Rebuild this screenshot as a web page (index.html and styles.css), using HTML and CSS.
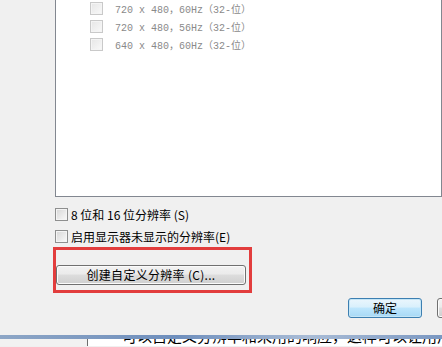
FILE: index.html
```html
<!DOCTYPE html>
<html lang="zh-CN">
<head>
    <meta charset="UTF-8">
    <title>显示器设置</title>
    <link rel="stylesheet" href="styles.css">
</head>
<body>
    <div class="dialog">
        <div class="modes">
            <div class="mode"><span class="box dim"></span>720 x 480，60Hz（32-位）</div>
            <div class="mode"><span class="box dim"></span>720 x 480，56Hz（32-位）</div>
            <div class="mode"><span class="box dim"></span>640 x 480，60Hz（32-位）</div>
        </div>

        <div class="options">
            <label class="option"><span class="box"></span>8 位和 16 位分辨率 (S)</label>
            <label class="option"><span class="box"></span>启用显示器未显示的分辨率(E)</label>
        </div>

        <div class="highlight">
            <button class="btn create">创建自定义分辨率 (C)...</button>
        </div>

        <div class="actions">
            <button class="btn default">确定</button>
            <button class="btn">取消</button>
        </div>
    </div>

    <div class="page">
        <div class="bar"></div>
        <div class="below">
            <div class="side"></div>
            <div class="text"><span>可以自定义分辨率和来用的响应，这样可以让用户，即分辨率、刷新率</span></div>
        </div>
    </div>
</body>
</html>
```

FILE: styles.css
```css
body {
    margin: 0;
    width: 442px;
    height: 347px;
    overflow: hidden;
    background: #f0f0f0;
    font-family: "Noto Sans CJK SC", sans-serif;
    font-size: 12px;
    color: #000;
}

.dialog {
    height: 336px;
    padding-left: 55px;
    box-sizing: border-box;
    white-space: nowrap;
}

.modes {
    height: 198px;
    box-sizing: border-box;
    background: #fff;
    border: 1px solid #828790;
    border-top: 0;
    padding-left: 34px;
}

.mode {
    display: flex;
    align-items: center;
    height: 18px;
    gap: 12px;
    margin-top: -1px;
    margin-bottom: 1px;
    color: #8a8a8a;
    font-family: "Liberation Mono", "Noto Sans CJK SC", monospace;
    font-size: 10px;
}

.box {
    flex: none;
    width: 13px;
    height: 13px;
    box-sizing: border-box;
    border: 1px solid #8e8f8f;
    background: linear-gradient(135deg, #d6d6d6, #fafafa);
    box-shadow: inset 0 0 0 1px #f4f4f4;
}

.box.dim {
    border-color: #c9c9c9;
    background: linear-gradient(135deg, #e6e6e6, #f9f9f9);
}

.options {
    margin-top: 6px;
}

.option {
    display: flex;
    align-items: center;
    gap: 3px;
    height: 22px;
}

.highlight {
    margin-left: -2px;
    width: 199px;
    height: 46px;
    box-sizing: border-box;
    border: 3px solid #e23d3d;
    padding-top: 15px;
}

.btn {
    height: 20px;
    padding: 0;
    border: 1px solid #707070;
    border-radius: 3px;
    background: linear-gradient(#f2f2f2 0%, #ebebeb 45%, #dddddd 50%, #cfcfcf 100%);
    box-shadow: inset 0 0 0 1px #fbfbfb;
    font-family: "Noto Sans CJK SC", sans-serif;
    font-size: 12px;
    line-height: 16px;
    color: #000;
}

.create {
    display: block;
    width: 190px;
    letter-spacing: 0.3px;
}

.actions {
    display: flex;
    gap: 15px;
    margin-top: 5px;
    padding-left: 293px;
}

.actions .btn {
    flex: none;
    width: 74px;
}

.btn.default {
    border-color: #3c7fb1;
    background: linear-gradient(#eaf6fd 0%, #d9f0fc 45%, #bee6fd 50%, #a7d9f5 100%);
    box-shadow: inset 0 0 0 1px #c4e5f6;
}

.bar {
    height: 4px;
    background: linear-gradient(90deg, #8da6c6, #6f8fbd 40%, #a9bcd6 70%, #7b98c2);
}

.below {
    display: flex;
    height: 7px;
    overflow: hidden;
}

.side {
    width: 87px;
    flex: none;
    background: #f2f2f2;
    border-right: 1px solid #6e6e6e;
}

.text {
    flex: 1;
    background: #fff;
    padding-left: 34px;
    white-space: nowrap;
    overflow: hidden;
}

.text span {
    display: block;
    margin-top: -12px;
    font-size: 15px;
    line-height: 18px;
}
```
